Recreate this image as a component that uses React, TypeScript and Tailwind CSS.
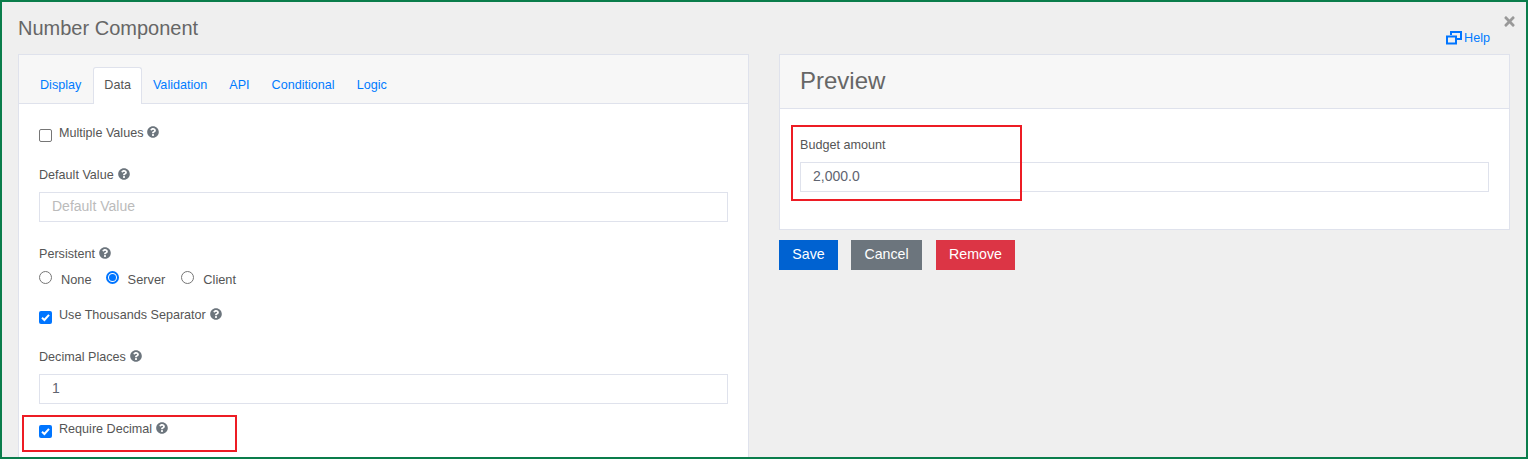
import { FaQuestionCircle, FaTimes } from "react-icons/fa";

const Hint = () => (
  <FaQuestionCircle className="ml-[4px] inline-block size-[12px] align-[-1px] text-[#6c757d]" />
);

const FormLabel = ({ text }: { text: string }) => (
  <div className="h-[18px] leading-[18px] text-[12.6px] text-[#555]">
    {text}
    <Hint />
  </div>
);

const TextBox = ({ value, placeholder }: { value?: string; placeholder?: boolean }) => (
  <div
    className={`flex h-[30px] items-center border border-[#dfe2ec] bg-white pb-[2px] pl-[12px] text-[14px] ${
      placeholder ? "text-[#bbbbbb]" : "text-[#5f6470]"
    }`}
  >
    {value}
  </div>
);

const CheckBox = ({ checked }: { checked?: boolean }) =>
  checked ? (
    <span className="flex size-[13px] items-center justify-center rounded-[2px] bg-[#0075ff]">
      <svg width="9" height="9" viewBox="0 0 9 9" fill="none">
        <path d="M1 4.800 L3.400 7 L8 1.800" stroke="white" strokeWidth="2" />
      </svg>
    </span>
  ) : (
    <span className="block size-[13px] rounded-[2px] border border-[#767676] bg-white" />
  );

const CheckRow = ({ text, checked }: { text: string; checked?: boolean }) => (
  <div className="flex h-[18px] items-start">
    <span className="mt-[5px] mr-[7px] shrink-0">
      <CheckBox checked={checked} />
    </span>
    <span className="leading-[18px] text-[12.6px] text-[#555]">
      {text}
      <Hint />
    </span>
  </div>
);

const Radio = ({ text, checked, className }: { text: string; checked?: boolean; className: string }) => (
  <div className={`flex items-center ${className}`}>
    {checked ? (
      <span className="-mt-[1px] flex size-[13px] items-center justify-center rounded-full border-2 border-[#0075ff] bg-white">
        <span className="size-[7px] rounded-full bg-[#0075ff]" />
      </span>
    ) : (
      <span className="-mt-[1px] size-[13px] rounded-full border border-[#767676] bg-white" />
    )}
    <span className="mt-[3px] ml-[9px] text-[12.8px] text-[#555]">{text}</span>
  </div>
);

const tabs = ["Display", "Data", "Validation", "API", "Conditional", "Logic"];

export default function App() {
  return (
    <div className="relative h-[459px] w-[1528px] overflow-hidden border-2 border-[#0a7d4b] bg-[#efefef] px-[16px] font-['Liberation_Sans',Arial,sans-serif]">
      <div className="h-[52px] pt-[13px] text-[20px] leading-[26px] text-[#666]">Number Component</div>
      <FaTimes className="absolute top-[12px] right-[9px] size-[15px] text-[#999]" />
      <div className="absolute top-[27px] right-[36px] flex items-center text-[12.6px] text-[#007bff]">
        <svg width="16" height="14" viewBox="0 0 16 14" fill="none" stroke="#0075ff" strokeWidth="2" className="mr-[2px]">
          <path d="M5 4V1h10v7h-4" />
          <rect x="1" y="5.500" width="9" height="7" />
        </svg>
        Help
      </div>

      <div className="grid grid-cols-2 gap-[30px]">
        <div className="h-[420px] border border-[#dfe2ec] bg-white">
          <div className="flex h-[49px] items-end border-b border-[#dfe2ec] bg-[#f7f7f7] pl-[10px]">
            {tabs.map((t) =>
              t === "Data" ? (
                <div
                  key={t}
                  className="-mb-px ml-[1px] flex h-[37px] items-center rounded-t-[3px] border border-b-0 border-[#dfe2ec] bg-white px-[10px] pb-[2px] text-[12.6px] text-[#555]"
                >
                  {t}
                </div>
              ) : (
                <div key={t} className="flex h-[37px] items-center px-[11px] pt-[1px] text-[12.6px] text-[#007bff]">
                  {t}
                </div>
              )
            )}
          </div>

          <div className="px-[20px] pt-[20px]">
            <CheckRow text="Multiple Values" />
            <div className="mt-[24px]">
              <FormLabel text="Default Value" />
            </div>
            <div className="mt-[8px]">
              <TextBox value="Default Value" placeholder />
            </div>
            <div className="mt-[23px]">
              <FormLabel text="Persistent" />
            </div>
            <div className="mt-[6px] flex h-[18px] items-center">
              <Radio text="None" className="mr-[14px]" />
              <Radio text="Server" checked className="mr-[16px]" />
              <Radio text="Client" className="" />
            </div>
            <div className="mt-[19px]">
              <CheckRow text="Use Thousands Separator" checked />
            </div>
            <div className="mt-[24px]">
              <FormLabel text="Decimal Places" />
            </div>
            <div className="mt-[8px]">
              <TextBox value="1" />
            </div>
            <div className="mt-[16px]">
              <CheckRow text="Require Decimal" checked />
            </div>
          </div>
        </div>

        <div>
          <div className="border border-[#dfe2ec] bg-white">
            <div className="flex h-[54px] items-center border-b border-[#dfe2ec] bg-[#f7f7f7] px-[20px] pb-[2px] text-[24px] text-[#666]">
              Preview
            </div>
            <div className="h-[120px] px-[20px] pt-[27px]">
              <div className="h-[18px] leading-[18px] text-[12.6px] text-[#555]">Budget amount</div>
              <div className="mt-[8px]">
                <TextBox value="2,000.0" />
              </div>
            </div>
          </div>
          <div className="mt-[10px] flex text-[14.2px] text-white">
            <div className="flex h-[30px] w-[59px] items-center justify-center bg-[#0062d1] pb-[1px]">Save</div>
            <div className="ml-[13px] flex h-[30px] w-[71px] items-center justify-center bg-[#6c757d] pb-[1px]">Cancel</div>
            <div className="ml-[14px] flex h-[30px] w-[79px] items-center justify-center bg-[#dc3545] pb-[1px]">Remove</div>
          </div>
        </div>
      </div>

      <div className="absolute top-[413px] left-[20px] h-[37px] w-[215px] border-2 border-[#ed1c24]" />
      <div className="absolute top-[123px] left-[789px] h-[76px] w-[231px] border-2 border-[#ed1c24]" />
    </div>
  );
}
